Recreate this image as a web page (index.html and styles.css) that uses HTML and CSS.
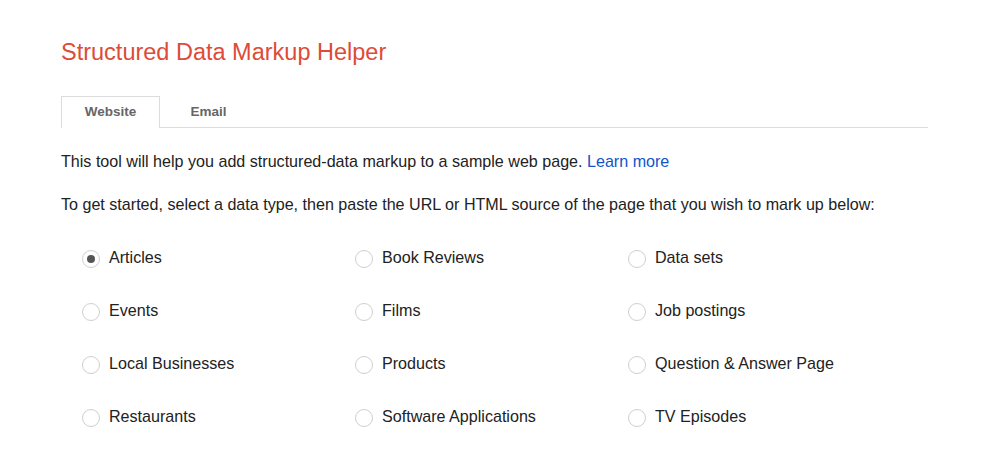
FILE: index.html
```html
<!DOCTYPE html>
<html>
<head>
<meta charset="utf-8">
<link rel="stylesheet" href="styles.css">
</head>
<body>
<div class="page">
  <h1 class="title">Structured Data Markup Helper</h1>
  <div class="tabs">
    <div class="tab active">Website</div>
    <div class="tab">Email</div>
  </div>
  <p class="intro">This tool will help you add structured-data markup to a sample web page. <a href="#" class="link">Learn more</a></p>
  <p class="intro second">To get started, select a data type, then paste the URL or HTML source of the page that you wish to mark up below:</p>
  <div class="types">
    <label class="opt"><span class="radio checked"></span>Articles</label>
    <label class="opt"><span class="radio"></span>Book Reviews</label>
    <label class="opt"><span class="radio"></span>Data sets</label>
    <label class="opt"><span class="radio"></span>Events</label>
    <label class="opt"><span class="radio"></span>Films</label>
    <label class="opt"><span class="radio"></span>Job postings</label>
    <label class="opt"><span class="radio"></span>Local Businesses</label>
    <label class="opt"><span class="radio"></span>Products</label>
    <label class="opt"><span class="radio"></span>Question &amp; Answer Page</label>
    <label class="opt"><span class="radio"></span>Restaurants</label>
    <label class="opt"><span class="radio"></span>Software Applications</label>
    <label class="opt"><span class="radio"></span>TV Episodes</label>
  </div>
</div>
</body>
</html>
```
FILE: styles.css
```css
html, body {
  margin: 0;
  padding: 0;
  background: #fff;
}
body {
  font-family: "Liberation Sans", Arial, sans-serif;
  color: #222;
}
.page {
  padding: 37px 0 0 61px;
  width: 867px;
}
.title {
  margin: 0;
  font-size: 23.5px;
  font-weight: normal;
  color: #dd4b39;
  line-height: 30px;
}
.tabs {
  display: flex;
  margin-top: 29px;
  border-bottom: 1px solid #dcdcdc;
  height: 31px;
}
.tab {
  width: 97px;
  box-sizing: border-box;
  text-align: center;
  font-size: 13.5px;
  font-weight: bold;
  color: #666;
  line-height: 30px;
  border: 1px solid transparent;
  border-bottom: none;
}
.tab.active {
  border-color: #dcdcdc;
  background: #fff;
  height: 32px;
  margin-bottom: -1px;
  width: 99px;
}
.intro {
  margin: 22px 0 0 0;
  font-size: 16.1px;
  line-height: 22px;
}
.intro.second {
  margin-top: 21px;
}
.link {
  color: #1155cc;
  text-decoration: none;
}
.types {
  display: grid;
  grid-template-columns: 273px 273px 273px;
  grid-auto-rows: 53px;
  margin: 31px 0 0 21px;
}
.opt {
  display: flex;
  align-items: center;
  height: 22px;
  font-size: 16.1px;
  color: #222;
}
.radio {
  width: 18px;
  height: 18px;
  border: 1px solid #cfcfcf;
  border-radius: 50%;
  box-sizing: border-box;
  margin-right: 9px;
  margin-top: 4px;
  display: flex;
  align-items: center;
  justify-content: center;
}
.radio.checked::after {
  content: "";
  width: 8px;
  height: 8px;
  border-radius: 50%;
  background: #555;
}
```
